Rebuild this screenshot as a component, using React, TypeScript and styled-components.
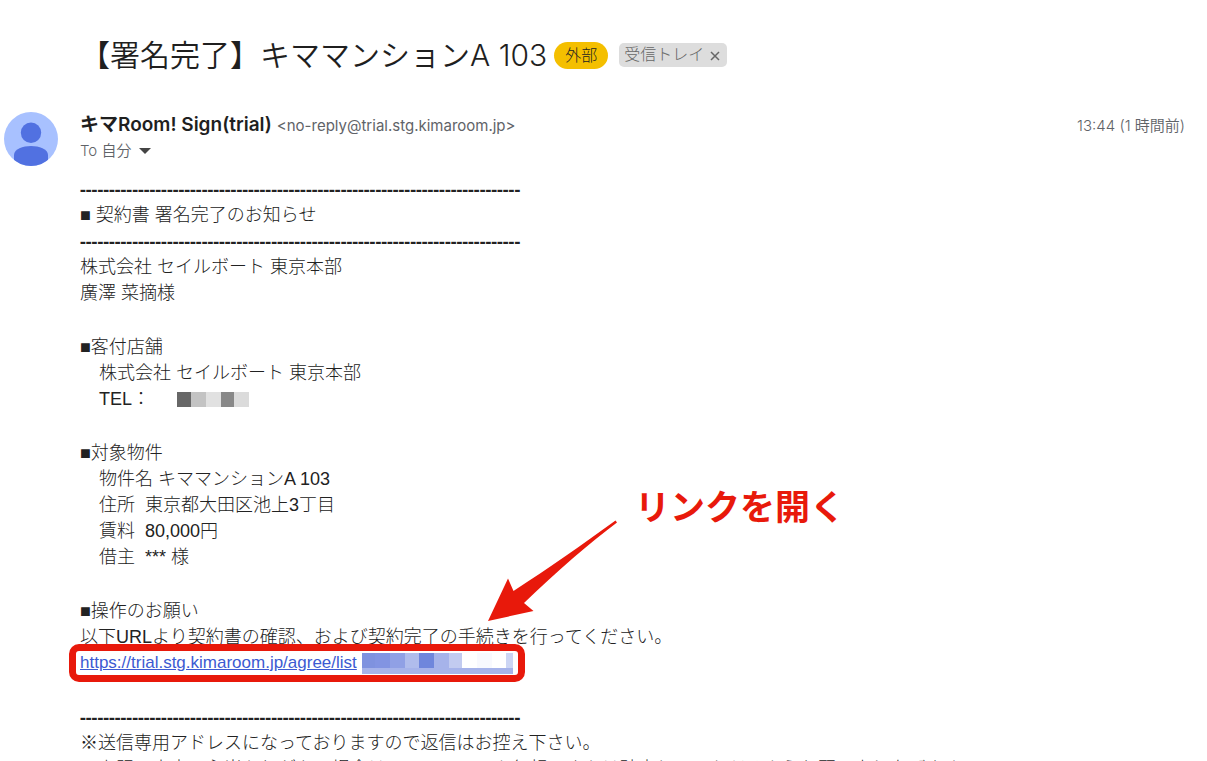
import React from "react";
import styled, { createGlobalStyle } from "styled-components";

const ink = "#222222";
const muted = "#5f6368";
const marker = "#e8190b";

const GlobalStyle = createGlobalStyle`
  * {
    box-sizing: border-box;
  }
  body {
    margin: 0;
    background: #ffffff;
    color: ${ink};
    font-family: "Liberation Sans", "Noto Sans CJK JP", sans-serif;
  }
`;

const Page = styled.main`
  padding: 31px 22px 0 4px;
`;

const SubjectBar = styled.header`
  display: flex;
  align-items: center;
  height: 48px;
  padding-left: 76px;
  white-space: nowrap;
`;

const Subject = styled.h1`
  margin: 0 7px 0 0;
  font-family: "Inter", "Noto Sans CJK JP", sans-serif;
  font-size: 30px;
  font-weight: 350;
  line-height: 46px;
  color: #1f1f1f;
`;

const ExternalBadge = styled.span`
  padding: 0 11px;
  border-radius: 14px;
  background: #f4bf00;
  font-size: 16px;
  font-weight: 300;
  line-height: 27px;
`;

const FolderChip = styled.span`
  display: flex;
  align-items: center;
  gap: 4px;
  margin-left: 11px;
  padding: 0 5px;
  border-radius: 5px;
  background: #dddddd;
  color: #666666;
  font-size: 16px;
  font-weight: 300;
  line-height: 24px;
`;

const RemoveButton = styled.button`
  display: flex;
  align-items: center;
  justify-content: center;
  width: 14px;
  height: 24px;
  padding: 2px 0 0;
  border: 0;
  background: none;
  color: inherit;
`;

const Message = styled.article`
  display: grid;
  grid-template-columns: 54px minmax(0, 1fr);
  column-gap: 22px;
  margin-top: 33px;
`;

const Avatar = styled.svg`
  display: block;
  width: 54px;
  height: 54px;
`;

const SenderRow = styled.div`
  display: flex;
  align-items: baseline;
  font-family: "Inter", "Noto Sans CJK JP", sans-serif;
  font-size: 15px;
  font-weight: 400;
  line-height: 25px;
  color: ${muted};
  white-space: nowrap;
`;

const SenderName = styled.strong`
  margin-right: 5px;
  font-size: 19px;
  font-weight: 600;
  color: #1f1f1f;
`;

const SentAt = styled.time`
  margin-left: auto;
  font-weight: 350;
`;

const RecipientRow = styled.div`
  display: flex;
  align-items: center;
  gap: 8px;
  font-family: "Inter", "Noto Sans CJK JP", sans-serif;
  font-size: 15px;
  font-weight: 350;
  line-height: 26px;
  color: ${muted};
`;

const DetailsButton = styled.button`
  display: flex;
  align-items: center;
  height: 26px;
  padding: 0;
  border: 0;
  background: none;
`;

const Body = styled.div`
  margin-top: 12px;
  font-size: 18px;
  font-weight: 300;
  line-height: 26px;
  white-space: pre;
`;

const Section = styled.section<{ $annotated?: boolean }>`
  position: ${(p) => (p.$annotated ? "relative" : "static")};
  margin-bottom: 28px;
`;

const Line = styled.p<{ $indent?: boolean }>`
  display: flex;
  height: 26px;
  margin: 0;
  padding-left: ${(p) => (p.$indent ? 19 : 0)}px;
`;

const Rule = styled(Line)`
  font-family: "Open Sans", sans-serif;
  font-weight: 700;
`;

const LinkLine = styled.p`
  position: relative;
  display: flex;
  align-items: center;
  width: max-content;
  height: 26px;
  margin: 0;

  &::after {
    content: "";
    position: absolute;
    inset: -6px -12px -6px -11px;
    border: 7px solid ${marker};
    border-radius: 10px;
    pointer-events: none;
  }
`;

const AgreementLink = styled.a`
  width: 282px;
  color: #3c5ad2;
  font-size: 17px;
`;

const PhoneMask = styled.svg`
  margin: 6px 0 0 27px;
`;

const Callout = styled.strong`
  position: absolute;
  left: 555px;
  top: -119px;
  color: ${marker};
  font-family: "Noto Sans CJK JP", sans-serif;
  font-size: 35px;
  font-weight: 700;
  line-height: 52px;
`;

const Arrow = styled.svg`
  position: absolute;
  left: 408px;
  top: -78px;
`;

type Block = [width: number, color: string];

const phoneBlocks: Block[] = [
  [14, "#676767"],
  [15, "#c3c3c3"],
  [15, "#e1e1e1"],
  [13, "#888888"],
  [15, "#dbdbdb"],
];

const linkBlocks: Block[] = [
  [13, "#7f92df"],
  [15, "#8294e2"],
  [15, "#90a0e5"],
  [14, "#b0bcec"],
  [15, "#6f86dc"],
  [15, "#a6b3ea"],
  [13, "#c2cbf0"],
  [15, "#ffffff"],
  [15, "#f8f9fe"],
  [14, "#ffffff"],
  [7, "#ccd5f4"],
];

function Blocks({ items }: { items: Block[] }) {
  let x = 0;
  return (
    <>
      {items.map(([width, color], i) => {
        const left = x;
        x += width;
        return <rect key={i} x={left} width={width} height="15" fill={color} />;
      })}
    </>
  );
}

const dashes = "-".repeat(76);

export default function App() {
  return (
    <>
      <GlobalStyle />
      <Page>
        <SubjectBar>
          <Subject>【署名完了】キママンションA 103</Subject>
          <ExternalBadge>外部</ExternalBadge>
          <FolderChip>
            受信トレイ
            <RemoveButton type="button" aria-label="受信トレイを外す">
              <svg width="10" height="10" viewBox="0 0 10 10" stroke="currentColor" strokeWidth="1.5">
                <path d="M1 1l8 8M9 1l-8 8" />
              </svg>
            </RemoveButton>
          </FolderChip>
        </SubjectBar>

        <Message>
          <Avatar viewBox="0 0 54 54" aria-hidden="true">
            <defs>
              <clipPath id="avatar-disc">
                <circle cx="27" cy="27" r="27" />
              </clipPath>
            </defs>
            <g clipPath="url(#avatar-disc)">
              <rect width="54" height="54" fill="#a8c1ff" />
              <circle cx="27" cy="20.700" r="10.200" fill="#5171e1" />
              <path d="M10 54V43C10 37 19 34 27 34S44 37 44 43V54Z" fill="#5171e1" />
            </g>
          </Avatar>
          <div>
            <SenderRow>
              <SenderName>キマRoom! Sign(trial)</SenderName>
              <span>&lt;no-reply@trial.stg.kimaroom.jp&gt;</span>
              <SentAt>13:44 (1 時間前)</SentAt>
            </SenderRow>
            <RecipientRow>
              To 自分
              <DetailsButton type="button" aria-label="詳細を表示">
                <svg width="12" height="6" viewBox="0 0 12 6" fill="#444444">
                  <path d="M0 0h12L6 6z" />
                </svg>
              </DetailsButton>
            </RecipientRow>

            <Body>
              <Section>
                <Rule>{dashes}</Rule>
                <Line>■ 契約書 署名完了のお知らせ</Line>
                <Rule>{dashes}</Rule>
                <Line>株式会社 セイルボート 東京本部</Line>
                <Line>廣澤 菜摘様</Line>
              </Section>

              <Section>
                <Line>■客付店舗</Line>
                <Line $indent>株式会社 セイルボート 東京本部</Line>
                <Line $indent>
                  TEL：
                  <PhoneMask width="72" height="15" aria-hidden="true">
                    <Blocks items={phoneBlocks} />
                  </PhoneMask>
                </Line>
              </Section>

              <Section>
                <Line>■対象物件</Line>
                <Line $indent>物件名 キママンションA 103</Line>
                <Line $indent>{"住所  東京都大田区池上3丁目"}</Line>
                <Line $indent>{"賃料  80,000円"}</Line>
                <Line $indent>{"借主  *** 様"}</Line>
              </Section>

              <Section $annotated>
                <Line>■操作のお願い</Line>
                <Line>以下URLより契約書の確認、および契約完了の手続きを行ってください。</Line>
                <LinkLine>
                  <AgreementLink href="#agree">https://trial.stg.kimaroom.jp/agree/list</AgreementLink>
                  <svg width="151" height="21" aria-hidden="true">
                    <Blocks items={linkBlocks} />
                    <rect y="15" width="151" height="6" fill="#a6b3ea" />
                  </svg>
                </LinkLine>
                <Callout>リンクを開く</Callout>
                <Arrow width="130" height="102" viewBox="0 0 130 102" aria-hidden="true">
                  <path
                    d="M0 101 20 58.500 25.500 71 C61 48 94 25 127.500 0.500L129 2.500C102 23 70 50 36 83L45.500 91Z"
                    fill={marker}
                  />
                </Arrow>
              </Section>

              <Section>
                <Rule>{dashes}</Rule>
                <Line>※送信専用アドレスになっておりますので返信はお控え下さい。</Line>
                <Line>{"　上記の内容に心当たりがない場合は、このメールを無視、または破棄していただくようお願い申し上げます。"}</Line>
              </Section>
            </Body>
          </div>
        </Message>
      </Page>
    </>
  );
}
